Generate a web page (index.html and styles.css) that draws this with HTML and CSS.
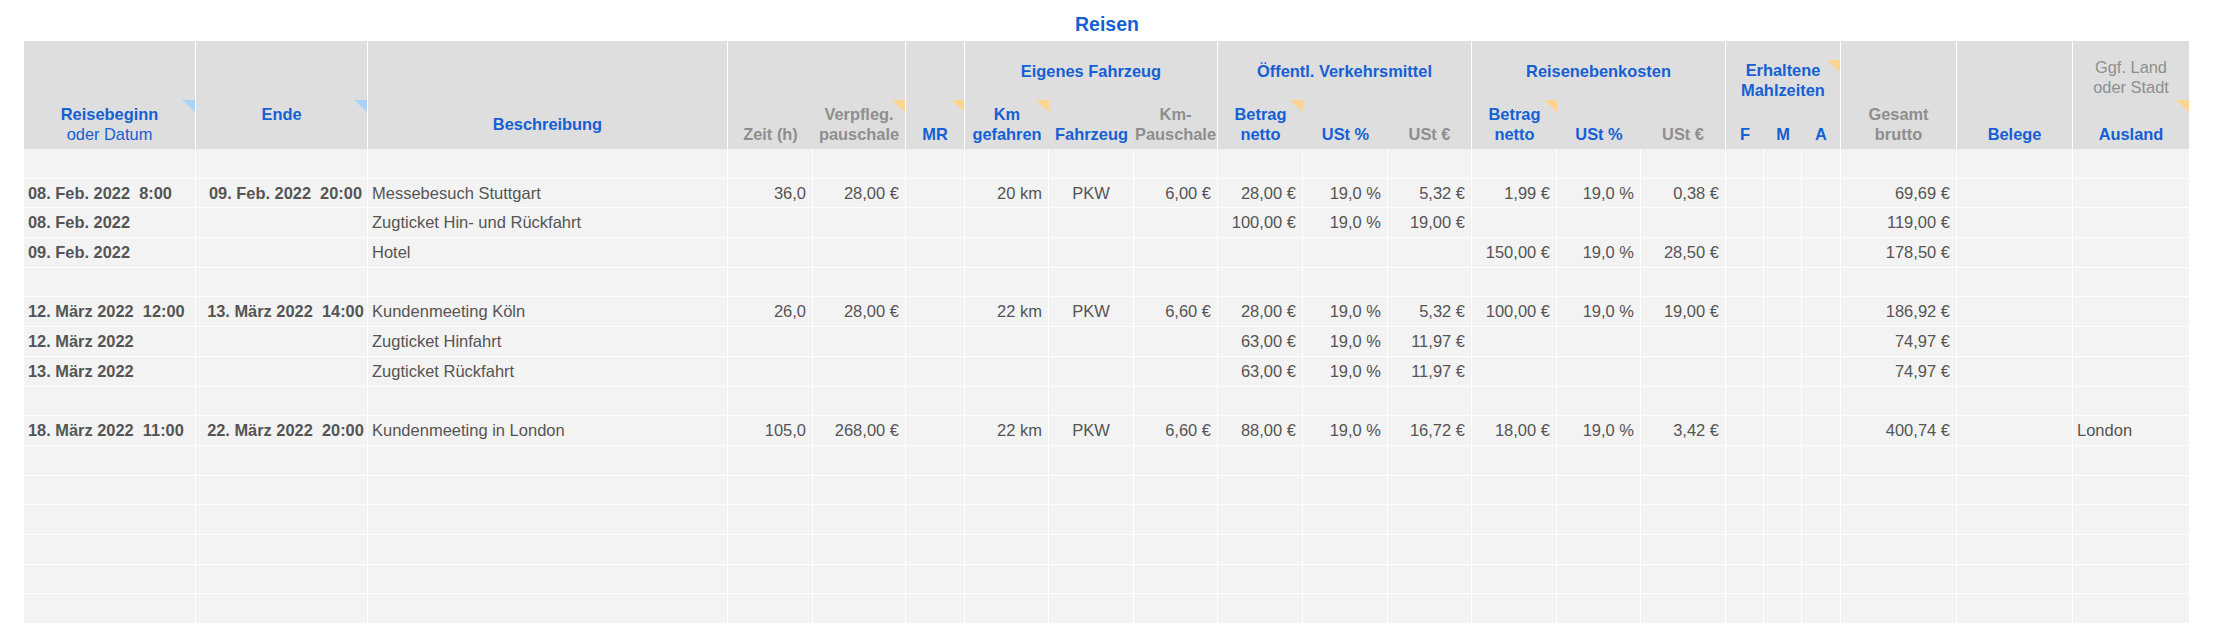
FILE: index.html
```html
<!DOCTYPE html>
<html lang="de">
<head>
<meta charset="utf-8">
<title>Reisen</title>
<link rel="stylesheet" href="styles.css">
</head>
<body>
<div class="sheet">
  <div class="title">Reisen</div>
  <div class="head">
    <div class="hc a-beg mark">Reisebeginn<br><span class="sub">oder Datum</span></div>
    <div class="hc a-end mark">Ende<br>&nbsp;</div>
    <div class="hc a-desc mid">Beschreibung</div>
    <div class="hc a-zeit gray nb">Zeit (h)</div>
    <div class="hc a-verp gray mark warm">Verpfleg.<br>pauschale</div>
    <div class="hc a-mr mark warm">MR</div>
    <div class="hc a-eig top">Eigenes Fahrzeug</div>
    <div class="hc a-km nb mark warm low">Km<br>gefahren</div>
    <div class="hc a-fz nb">Fahrzeug</div>
    <div class="hc a-kmp gray">Km-<br>Pauschale</div>
    <div class="hc a-oef top">Öffentl. Verkehrsmittel</div>
    <div class="hc a-ob nb mark warm low">Betrag<br>netto</div>
    <div class="hc a-ou nb">USt %</div>
    <div class="hc a-oe gray">USt €</div>
    <div class="hc a-neb top">Reisenebenkosten</div>
    <div class="hc a-nb nb mark warm low">Betrag<br>netto</div>
    <div class="hc a-nu nb">USt %</div>
    <div class="hc a-ne gray">USt €</div>
    <div class="hc a-mahl top top-mahl mark warm hi">Erhaltene<br>Mahlzeiten</div>
    <div class="hc a-mf nb">F</div>
    <div class="hc a-mm nb">M</div>
    <div class="hc a-ma">A</div>
    <div class="hc a-ges gray">Gesamt<br>brutto</div>
    <div class="hc a-bel">Belege</div>
    <div class="hc a-aus split mark warm"><span class="note">Ggf. Land<br>oder Stadt</span><span>Ausland</span></div>
  </div>
  <div class="body">
    <div class="row"><span></span><span></span><span></span><span></span><span></span><span></span><span></span><span></span><span></span><span></span><span></span><span></span><span></span><span></span><span></span><span></span><span></span><span></span><span></span><span></span><span></span></div>
    <div class="row"><span>08. Feb. 2022  8:00</span><span>09. Feb. 2022  20:00</span><span>Messebesuch Stuttgart</span><span>36,0</span><span>28,00 €</span><span></span><span>20 km</span><span>PKW</span><span>6,00 €</span><span>28,00 €</span><span>19,0 %</span><span>5,32 €</span><span>1,99 €</span><span>19,0 %</span><span>0,38 €</span><span></span><span></span><span></span><span>69,69 €</span><span></span><span></span></div>
    <div class="row"><span>08. Feb. 2022</span><span></span><span>Zugticket Hin- und Rückfahrt</span><span></span><span></span><span></span><span></span><span></span><span></span><span>100,00 €</span><span>19,0 %</span><span>19,00 €</span><span></span><span></span><span></span><span></span><span></span><span></span><span>119,00 €</span><span></span><span></span></div>
    <div class="row"><span>09. Feb. 2022</span><span></span><span>Hotel</span><span></span><span></span><span></span><span></span><span></span><span></span><span></span><span></span><span></span><span>150,00 €</span><span>19,0 %</span><span>28,50 €</span><span></span><span></span><span></span><span>178,50 €</span><span></span><span></span></div>
    <div class="row"><span></span><span></span><span></span><span></span><span></span><span></span><span></span><span></span><span></span><span></span><span></span><span></span><span></span><span></span><span></span><span></span><span></span><span></span><span></span><span></span><span></span></div>
    <div class="row"><span>12. März 2022  12:00</span><span>13. März 2022  14:00</span><span>Kundenmeeting Köln</span><span>26,0</span><span>28,00 €</span><span></span><span>22 km</span><span>PKW</span><span>6,60 €</span><span>28,00 €</span><span>19,0 %</span><span>5,32 €</span><span>100,00 €</span><span>19,0 %</span><span>19,00 €</span><span></span><span></span><span></span><span>186,92 €</span><span></span><span></span></div>
    <div class="row"><span>12. März 2022</span><span></span><span>Zugticket Hinfahrt</span><span></span><span></span><span></span><span></span><span></span><span></span><span>63,00 €</span><span>19,0 %</span><span>11,97 €</span><span></span><span></span><span></span><span></span><span></span><span></span><span>74,97 €</span><span></span><span></span></div>
    <div class="row"><span>13. März 2022</span><span></span><span>Zugticket Rückfahrt</span><span></span><span></span><span></span><span></span><span></span><span></span><span>63,00 €</span><span>19,0 %</span><span>11,97 €</span><span></span><span></span><span></span><span></span><span></span><span></span><span>74,97 €</span><span></span><span></span></div>
    <div class="row"><span></span><span></span><span></span><span></span><span></span><span></span><span></span><span></span><span></span><span></span><span></span><span></span><span></span><span></span><span></span><span></span><span></span><span></span><span></span><span></span><span></span></div>
    <div class="row"><span>18. März 2022  11:00</span><span>22. März 2022  20:00</span><span>Kundenmeeting in London</span><span>105,0</span><span>268,00 €</span><span></span><span>22 km</span><span>PKW</span><span>6,60 €</span><span>88,00 €</span><span>19,0 %</span><span>16,72 €</span><span>18,00 €</span><span>19,0 %</span><span>3,42 €</span><span></span><span></span><span></span><span>400,74 €</span><span></span><span>London</span></div>
    <div class="row"><span></span><span></span><span></span><span></span><span></span><span></span><span></span><span></span><span></span><span></span><span></span><span></span><span></span><span></span><span></span><span></span><span></span><span></span><span></span><span></span><span></span></div>
    <div class="row"><span></span><span></span><span></span><span></span><span></span><span></span><span></span><span></span><span></span><span></span><span></span><span></span><span></span><span></span><span></span><span></span><span></span><span></span><span></span><span></span><span></span></div>
    <div class="row"><span></span><span></span><span></span><span></span><span></span><span></span><span></span><span></span><span></span><span></span><span></span><span></span><span></span><span></span><span></span><span></span><span></span><span></span><span></span><span></span><span></span></div>
    <div class="row"><span></span><span></span><span></span><span></span><span></span><span></span><span></span><span></span><span></span><span></span><span></span><span></span><span></span><span></span><span></span><span></span><span></span><span></span><span></span><span></span><span></span></div>
    <div class="row"><span></span><span></span><span></span><span></span><span></span><span></span><span></span><span></span><span></span><span></span><span></span><span></span><span></span><span></span><span></span><span></span><span></span><span></span><span></span><span></span><span></span></div>
    <div class="row"><span></span><span></span><span></span><span></span><span></span><span></span><span></span><span></span><span></span><span></span><span></span><span></span><span></span><span></span><span></span><span></span><span></span><span></span><span></span><span></span><span></span></div>
    <div class="row"><span></span><span></span><span></span><span></span><span></span><span></span><span></span><span></span><span></span><span></span><span></span><span></span><span></span><span></span><span></span><span></span><span></span><span></span><span></span><span></span><span></span></div>
  </div>
</div>
</body>
</html>
```

FILE: styles.css
```css
html, body {
  margin: 0;
  padding: 0;
  background: #fff;
}

body {
  font-family: "Liberation Sans", Arial, Helvetica, sans-serif;
  width: 2220px;
  height: 624px;
  overflow: hidden;
}

.sheet {
  --cols: 172px 172px 360px 85px 93px 59px 84px 85px 84px 85px 85px 84px 85px 84px 85px 38px 38px 39px 116px 116px 117px;
  margin-left: 24px;
  width: 2166px;
}

.title {
  height: 41px;
  box-sizing: border-box;
  padding-top: 14px;
  line-height: 20px;
  text-align: center;
  font-size: 19.5px;
  font-weight: bold;
  color: #1560d4;
}

/* ---------- header ---------- */
.head {
  display: grid;
  grid-template-columns: var(--cols);
  grid-template-rows: 54px 54px;
  grid-template-areas:
    "beg end desc zeit verp mr eig eig eig oef oef oef neb neb neb mahl mahl mahl ges bel aus"
    "beg end desc zeit verp mr km fz kmp ob ou oe nb nu ne mf mm ma ges bel aus";
  background: #dedede;
}

.hc {
  position: relative;
  display: flex;
  flex-direction: column;
  justify-content: flex-end;
  align-items: center;
  text-align: center;
  box-sizing: border-box;
  padding-bottom: 4.5px;
  border-right: 1px solid #fff;
  font-size: 16.4px;
  line-height: 19.8px;
  font-weight: bold;
  color: #1560d4;
  white-space: nowrap;
}

.hc.nb { border-right: 0; }
.hc.gray { color: #8e8e8e; }
.hc.mid { padding-bottom: 14.4px; }
.hc.top {
  justify-content: flex-start;
  padding: 21px 0 0;
}
.hc.top-mahl { padding-top: 20px; line-height: 19.6px; }
.hc.split {
  justify-content: space-between;
  padding-top: 17px;
}

.sub { font-weight: normal; }
.note { font-weight: normal; color: #8e8e8e; }

.a-beg { grid-area: beg; }
.a-end { grid-area: end; }
.a-desc { grid-area: desc; }
.a-zeit { grid-area: zeit; }
.a-verp { grid-area: verp; }
.a-mr { grid-area: mr; }
.a-eig { grid-area: eig; }
.a-km { grid-area: km; }
.a-fz { grid-area: fz; }
.a-kmp { grid-area: kmp; }
.a-oef { grid-area: oef; }
.a-ob { grid-area: ob; }
.a-ou { grid-area: ou; }
.a-oe { grid-area: oe; }
.a-neb { grid-area: neb; }
.a-nb { grid-area: nb; }
.a-nu { grid-area: nu; }
.a-ne { grid-area: ne; }
.a-mahl { grid-area: mahl; }
.a-mf { grid-area: mf; }
.a-mm { grid-area: mm; }
.a-ma { grid-area: ma; }
.a-ges { grid-area: ges; }
.a-bel { grid-area: bel; }
.a-aus { grid-area: aus; }

/* comment markers */
.mark::after {
  content: "";
  position: absolute;
  right: 0;
  top: 59px;
  width: 13px;
  height: 12px;
  background: #a9d2f6;
  clip-path: polygon(0 0, 100% 0, 100% 100%);
}
.mark.warm::after { background: #fdd48f; }
.mark.low::after { top: 5px; }
.mark.hi::after { top: 19px; }

/* ---------- body rows ---------- */
.row {
  display: grid;
  grid-template-columns: var(--cols);
  height: 29.7px;
  background: #f3f3f3;
}

.row > span {
  box-sizing: border-box;
  border-right: 1px solid #fff;
  border-bottom: 1px solid #fff;
  padding: 0 6px 0 4px;
  font-size: 16.5px;
  line-height: 28.7px;
  color: #555;
  white-space: pre;
  overflow: hidden;
  text-align: left;
}

.row > span:nth-child(1),
.row > span:nth-child(2) {
  font-weight: bold;
  font-size: 16.4px;
}

.row > span:nth-child(2) {
  text-align: center;
  padding: 0 0 0 8px;
  overflow: visible;
}

.row > span:nth-child(n+4):nth-child(-n+7),
.row > span:nth-child(n+9):nth-child(-n+15),
.row > span:nth-child(19) {
  text-align: right;
}

.row > span:nth-child(8) {
  text-align: center;
  padding: 0 3px;
}
```
